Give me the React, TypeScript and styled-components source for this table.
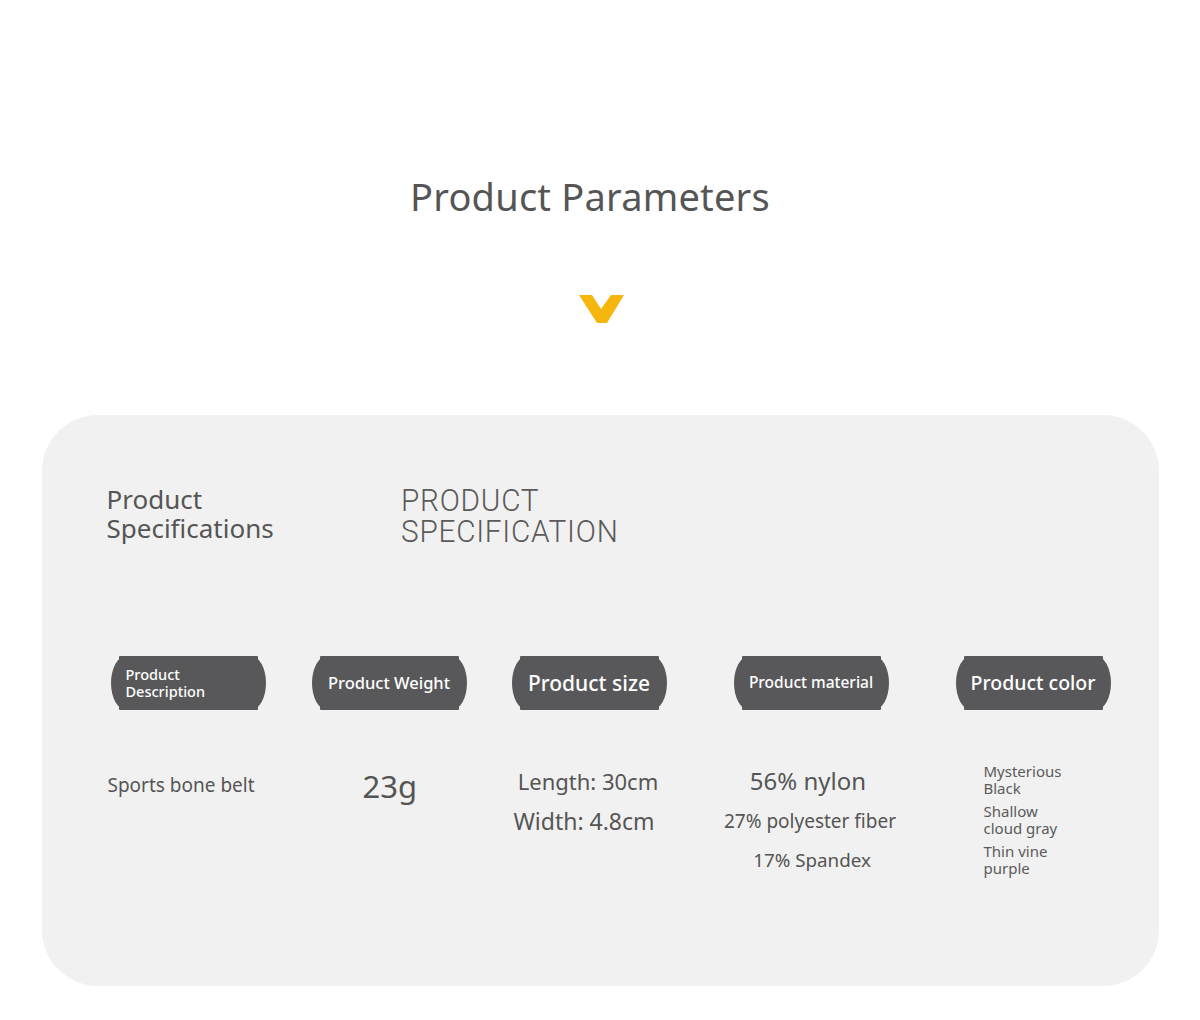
import * as React from "react";
import styled, { createGlobalStyle } from "styled-components";

const GlobalStyle = createGlobalStyle`
  body {
    margin: 0;
    background: #ffffff;
    font-family: "Noto Sans", "Open Sans", sans-serif;
    color: #555555;
  }
`;

const Page = styled.div`
  width: 1200px;
  height: 1020px;
  box-sizing: border-box;
  padding-top: 170px;
  display: flex;
  flex-direction: column;
  align-items: center;
`;

const Title = styled.h1`
  margin: 0;
  font-size: 38px;
  font-weight: 400;
  line-height: 52px;
  color: #555555;
  letter-spacing: 0.2px;
  transform: translateX(-10px);
`;

const Chevron = styled.svg`
  display: block;
  margin-top: 72px;
  margin-left: 4px;
`;

const Card = styled.section`
  margin-top: 91px;
  width: 1117px;
  height: 571px;
  box-sizing: border-box;
  background: #f1f1f1;
  border-radius: 56px;
  padding: 70px 0 0 65px;
`;

const HeadRow = styled.div`
  display: flex;
  align-items: flex-start;
`;

const SpecLabel = styled.h2`
  margin: 0;
  width: 294px;
  font-size: 26px;
  font-weight: 400;
  line-height: 29px;
  color: #555555;
`;

const SpecCaps = styled.div`
  font-family: Roboto, "DejaVu Sans", sans-serif;
  font-weight: 300;
  font-size: 32px;
  line-height: 31px;
  letter-spacing: 0.8px;
  color: #5a5a5a;
  transform: scaleX(0.93);
  transform-origin: left top;
`;

const Columns = styled.div`
  display: grid;
  grid-template-columns: 201px 200px 222px 222px 155px;
  margin-top: 109px;
  margin-left: 4px;
`;

const Column = styled.div`
  display: flex;
  flex-direction: column;
  width: 155px;
`;

const Pill = styled.div<{ $size: number }>`
  position: relative;
  width: 155px;
  height: 54px;
  box-sizing: border-box;
  border-radius: 15px / 27px;
  background: #58585a;
  color: #ffffff;
  font-size: ${(p) => p.$size}px;
  font-weight: 500;
  line-height: 1.15;
  display: flex;
  align-items: center;
  justify-content: center;
  text-align: center;
  z-index: 0;

  &::before {
    content: "";
    position: absolute;
    top: 0;
    bottom: 0;
    left: 8px;
    right: 8px;
    background: #58585a;
    border-radius: 1px;
    z-index: -1;
  }
`;

const PillLeft = styled(Pill)`
  justify-content: flex-start;
  text-align: left;
  padding-left: 15px;
`;

const Values = styled.div<{ $align: "left" | "center"; $top: number; $indent?: number }>`
  display: flex;
  flex-direction: column;
  align-items: ${(p) => (p.$align === "left" ? "flex-start" : "center")};
  padding-top: ${(p) => p.$top}px;
  padding-left: ${(p) => p.$indent ?? 0}px;
`;

const Value = styled.div<{ $size: number; $gap?: number; $shift?: number }>`
  font-size: ${(p) => p.$size}px;
  line-height: 1.2;
  color: #555555;
  margin-bottom: ${(p) => p.$gap ?? 0}px;
  transform: translateX(${(p) => p.$shift ?? 0}px);
  white-space: nowrap;
`;

const ColorName = styled.div`
  font-size: 15px;
  line-height: 17px;
  color: #5a5a5a;
  margin-bottom: 6px;
  white-space: nowrap;
`;

export default function App() {
  return (
    <Page>
      <GlobalStyle />
      <Title>Product Parameters</Title>
      <Chevron width="46" height="30" viewBox="0 0 46 30">
        <polygon points="0,1 13,1 22,15 32,1 45,1 28,29 18,29" fill="#f5b60e" />
      </Chevron>
      <Card>
        <HeadRow>
          <SpecLabel>
            Product
            <br />
            Specifications
          </SpecLabel>
          <SpecCaps>
            PRODUCT
            <br />
            SPECIFICATION
          </SpecCaps>
        </HeadRow>
        <Columns>
          <Column>
            <PillLeft $size={14.5}>
              Product
              <br />
              Description
            </PillLeft>
            <Values $align="left" $top={64} $indent={0}>
              <Value $size={19} $shift={-3}>Sports bone belt</Value>
            </Values>
          </Column>
          <Column>
            <Pill $size={16.5}>Product Weight</Pill>
            <Values $align="left" $top={58} $indent={51}>
              <Value $size={31}>23g</Value>
            </Values>
          </Column>
          <Column>
            <Pill $size={21}>Product size</Pill>
            <Values $align="center" $top={58}>
              <Value $size={22} $gap={14} $shift={-1}>Length: 30cm</Value>
              <Value $size={23} $shift={-5}>Width: 4.8cm</Value>
            </Values>
          </Column>
          <Column>
            <Pill $size={15.5}>Product material</Pill>
            <Values $align="center" $top={57}>
              <Value $size={24} $gap={14} $shift={-3}>56% nylon</Value>
              <Value $size={19} $gap={16} $shift={-1}>27% polyester fiber</Value>
              <Value $size={18.8} $shift={1}>17% Spandex</Value>
            </Values>
          </Column>
          <Column>
            <Pill $size={19.5}>Product color</Pill>
            <Values $align="left" $top={53} $indent={28}>
              <ColorName>
                Mysterious
                <br />
                Black
              </ColorName>
              <ColorName>
                Shallow
                <br />
                cloud gray
              </ColorName>
              <ColorName>
                Thin vine
                <br />
                purple
              </ColorName>
            </Values>
          </Column>
        </Columns>
      </Card>
    </Page>
  );
}
